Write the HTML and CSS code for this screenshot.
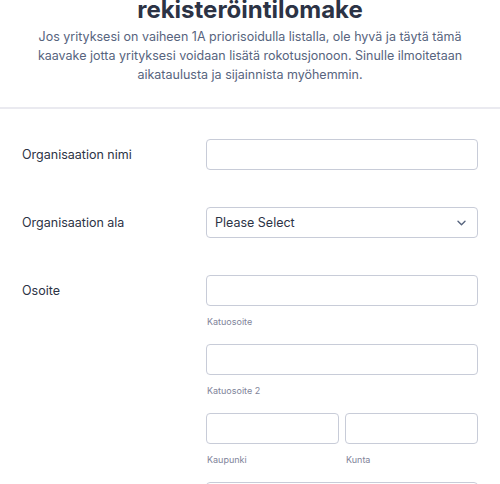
FILE: index.html
```html
<!DOCTYPE html>
<html lang="fi">
<head>
<meta charset="utf-8">
<link rel="stylesheet" href="styles.css">
</head>
<body>
<div class="form">
  <header class="header">
    <h1 class="title">rekisteröintilomake</h1>
    <p class="desc">Jos yrityksesi on vaiheen 1A priorisoidulla listalla, ole hyvä ja täytä tämä kaavake jotta yrityksesi voidaan lisätä rokotusjonoon. Sinulle ilmoitetaan aikataulusta ja sijainnista myöhemmin.</p>
  </header>
  <div class="fields">
    <div class="row">
      <label class="label">Organisaation nimi</label>
      <div class="control"><div class="input"></div></div>
    </div>
    <div class="row">
      <label class="label">Organisaation ala</label>
      <div class="control">
        <div class="input select">
          <span>Please Select</span>
          <svg class="chev" width="9" height="6" viewBox="0 0 9 6"><path d="M1 1.2l3.5 3.5 3.5-3.5" fill="none" stroke="#57647e" stroke-width="1.4" stroke-linecap="round" stroke-linejoin="round"/></svg>
        </div>
      </div>
    </div>
    <div class="row">
      <label class="label">Osoite</label>
      <div class="control addr">
        <div class="sub full"><div class="input"></div><span class="sublabel">Katuosoite</span></div>
        <div class="sub full"><div class="input"></div><span class="sublabel">Katuosoite 2</span></div>
        <div class="sub"><div class="input"></div><span class="sublabel">Kaupunki</span></div>
        <div class="sub"><div class="input"></div><span class="sublabel">Kunta</span></div>
        <div class="sub full"><div class="input"></div><span class="sublabel">Postinumero</span></div>
      </div>
    </div>
  </div>
</div>
</body>
</html>
```
FILE: styles.css
```css
html, body { margin: 0; padding: 0; background: #fff; }
body { font-family: Inter, "Noto Sans", sans-serif; color: #2c3345; overflow: hidden; height: 484px; }
.header { display: flow-root; text-align: center; padding: 0 30px; border-bottom: 2px solid #eaeaf0; height: 107px; box-sizing: content-box; }
.title { margin: -6px 0 0; font-size: 24px; line-height: 32px; font-weight: 700; color: #2c3345; letter-spacing: 0; }
.desc { margin: 1px auto 0; font-size: 12.5px; line-height: 19px; color: #57647e; max-width: 440px; }
.fields { padding: 30px 22px 0 22px; }
.row { display: flex; align-items: flex-start; margin-bottom: 37px; }
.label { width: 184px; flex: none; font-size: 12.5px; font-weight: 400; line-height: 31px; color: #2c3345; }
.control { flex: 1; }
.input { height: 31px; box-sizing: border-box; border: 1px solid #c8ccd8; border-radius: 4px; background: #fff; }
.select { display: flex; align-items: center; justify-content: space-between; padding: 0 11px 0 8px; font-size: 12.5px; color: #2c3345; }
.chev { display: block; }
.addr { display: grid; grid-template-columns: 1fr 1fr; column-gap: 6px; row-gap: 15px; }
.sub { display: flex; flex-direction: column; }
.sub.full { grid-column: 1 / 3; }
.sublabel { font-size: 9px; line-height: 15px; margin-top: 8px; color: #7f849a; padding-left: 1px; }
```
